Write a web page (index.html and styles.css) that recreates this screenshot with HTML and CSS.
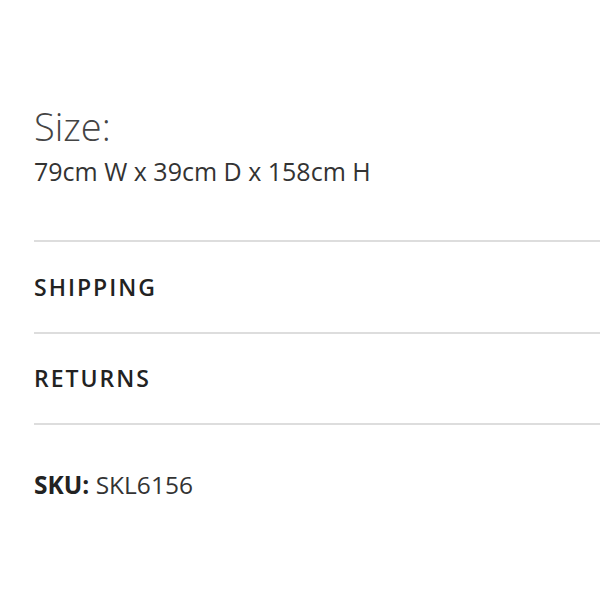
FILE: index.html
```html
<!DOCTYPE html>
<html>
<head>
<meta charset="utf-8">
<link rel="stylesheet" href="styles.css">
</head>
<body>
<div class="panel">
  <div class="size">
    <h2 class="size-title">Size:</h2>
    <p class="size-value">79cm W x 39cm D x 158cm H</p>
  </div>
  <div class="accordion">
    <div class="acc-item">SHIPPING</div>
    <div class="acc-item">RETURNS</div>
  </div>
  <p class="sku"><span class="sku-label">SKU:</span> SKL6156</p>
</div>
</body>
</html>
```
FILE: styles.css
```css
html, body {
  margin: 0;
  padding: 0;
  background: #fff;
}
body {
  font-family: "Open Sans", "Liberation Sans", sans-serif;
  color: #333;
}
.panel {
  padding: 102px 0 0 34px;
}
.size-title {
  margin: 0;
  font-size: 38px;
  font-weight: 300;
  line-height: 48px;
  color: #444;
}
.size-value {
  margin: 6px 0 0;
  font-size: 25px;
  line-height: 30px;
  color: #333;
}
.accordion {
  margin-top: 54px;
  border-top: 2px solid #ddd;
  margin-right: -10px;
}
.acc-item {
  height: 89.5px;
  display: flex;
  align-items: center;
  border-bottom: 2px solid #ddd;
  font-size: 23px;
  font-weight: 600;
  letter-spacing: 2px;
  color: #222;
}
.sku {
  margin: 45px 0 0;
  font-size: 24.5px;
  line-height: 30px;
  color: #333;
}
.sku-label {
  font-weight: 700;
  color: #222;
}
```
